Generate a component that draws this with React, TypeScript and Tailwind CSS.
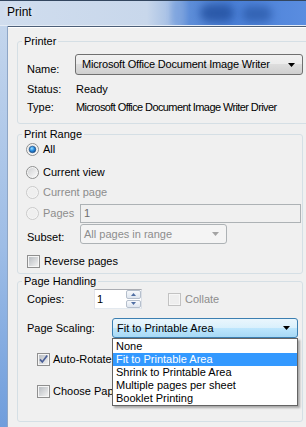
import React from "react";

function Radio({ checked = false, disabled = false }: { checked?: boolean; disabled?: boolean }) {
  return (
    <svg width="13" height="13" viewBox="0 0 13 13" className="shrink-0">
      <defs>
        <linearGradient id="radioFill" x1="0" y1="0" x2="1" y2="1">
          <stop offset="0" stopColor="#cfd0d2" />
          <stop offset="1" stopColor="#fbfbfb" />
        </linearGradient>
        <radialGradient id="radioDot" cx="0.4" cy="0.35" r="0.75">
          <stop offset="0" stopColor="#9be0ff" />
          <stop offset="0.45" stopColor="#2a8ee2" />
          <stop offset="1" stopColor="#0c3f7e" />
        </radialGradient>
      </defs>
      <circle cx="6.5" cy="6.5" r="6" fill="#f6f6f6" stroke={disabled ? "#c9c9c9" : "#8e8f8f"} />
      <circle cx="6.5" cy="6.5" r="4.6" fill={disabled ? "#efefef" : "url(#radioFill)"} />
      {checked && <circle cx="6.5" cy="6.5" r="3.3" fill="url(#radioDot)" stroke="#19497f" strokeWidth="0.6" />}
    </svg>
  );
}

function Check({ checked = false, disabled = false }: { checked?: boolean; disabled?: boolean }) {
  return (
    <svg width="13" height="13" viewBox="0 0 13 13" className="shrink-0">
      <defs>
        <linearGradient id="checkFill" x1="0" y1="0" x2="1" y2="1">
          <stop offset="0" stopColor="#b9bdc2" />
          <stop offset="1" stopColor="#f1f1f1" />
        </linearGradient>
      </defs>
      <rect x="0.5" y="0.5" width="12" height="12" fill="#f6f6f6" stroke={disabled ? "#c2c2c2" : "#8f8f8f"} />
      <rect x="2" y="2" width="9" height="9" fill={disabled ? "#eeeeee" : "url(#checkFill)"} />
      {checked && <path d="M3 6.4l2.3 2.6L10.2 2.6" fill="none" stroke="#4a5f97" strokeWidth="1.7" />}
    </svg>
  );
}

function Arrow({ color = "#000" }: { color?: string }) {
  return (
    <svg width="7" height="4" viewBox="0 0 7 4" className="shrink-0">
      <path d="M0 0h7L3.5 4z" fill={color} />
    </svg>
  );
}

function SpinButton({ up }: { up?: boolean }) {
  return (
    <div className="flex-1 flex items-center justify-center border border-[#b5bfcc] rounded-[2px] bg-[linear-gradient(to_bottom,#f7f9fc,#dfe6ef)]">
      <svg width="5" height="3" viewBox="0 0 5 3">
        <path d={up ? "M0 3h5L2.5 0z" : "M0 0h5L2.5 3z"} fill="#4f6ea3" />
      </svg>
    </div>
  );
}

function TitleBar() {
  return (
    <div className="relative h-[26px] shrink-0 overflow-hidden border-t border-[#33465f] border-b border-b-[#e4ecf6] bg-[linear-gradient(90deg,#d0ddee_0%,#c8d7eb_48%,#a8c1e5_55%,#5d8dd8_62%,#4a7fd6_75%,#5a8de0_100%)]">
      <div className="absolute left-[200px] top-[3px] w-[34px] h-[18px] rounded-full bg-[#224f9e] blur-[4px] opacity-80" />
      <div className="absolute left-[242px] top-[5px] w-[30px] h-[16px] rounded-full bg-[#2a59a8] blur-[4px] opacity-75" />
      <div className="absolute left-[172px] top-0 w-[10px] h-[24px] bg-[#7aa1de] blur-[3px] opacity-70" />
      <div className="relative pl-[7px] pt-[4px] text-[12px] leading-[15px] text-black [text-shadow:0_0_6px_rgba(255,255,255,0.9)]">
        Print
      </div>
    </div>
  );
}

export default function App() {
  return (
    <div className="w-[306px] h-[427px] overflow-hidden flex flex-col bg-[#f0f0f0] font-['Liberation_Sans',Arial,sans-serif] text-[11px] leading-[13px] text-black">
      <TitleBar />
      <div className="flex flex-1 min-h-0">
        <div className="w-[8px] shrink-0 border-r border-[#8ea6c6] bg-[linear-gradient(to_bottom,#c3d5ec,#9ebde6_55%,#6f9ddc)]" />
        <div className="flex-1 min-w-0 overflow-hidden border-t border-[#4d5f78] shadow-[inset_0_1px_0_#ffffff] pl-[9px]">
          {/* Printer */}
          <fieldset className="mt-[8px] w-[300px] border border-[#d5dfe5] rounded-[3px] pb-[9px]">
            <legend className="ml-[4px] px-[2px] leading-[13px]">Printer</legend>
            <div className="flex items-start mt-[6px] pl-[9px]">
              <span className="w-[48px] mt-[9px]">Name:</span>
              <div className="w-[228px] h-[21px] flex items-center justify-between pl-[6px] pr-[7px] border border-[#707070] rounded-[3px] bg-[linear-gradient(to_bottom,#f2f2f2_0%,#ebebeb_50%,#dddddd_50%,#cfcfcf_100%)] tracking-[-0.2px]">
                <span>Microsoft Office Document Image Writer</span>
                <Arrow />
              </div>
            </div>
            <div className="flex mt-[7px] pl-[9px]">
              <span className="w-[49px]">Status:</span>
              <span>Ready</span>
            </div>
            <div className="flex mt-[5px] pl-[9px]">
              <span className="w-[49px]">Type:</span>
              <span className="whitespace-nowrap tracking-[-0.6px]">Microsoft Office Document Image Writer Driver</span>
            </div>
          </fieldset>

          {/* Print Range */}
          <fieldset className="mt-[4px] w-[286px] border border-[#d5dfe5] rounded-[3px] pb-[5px]">
            <legend className="ml-[4px] px-[2px] leading-[13px]">Print Range</legend>
            <div className="flex items-center gap-[4px] h-[13px] mt-[2px] pl-[8px]">
              <Radio checked />
              <span>All</span>
            </div>
            <div className="flex items-center gap-[4px] h-[13px] mt-[10px] pl-[8px]">
              <Radio />
              <span>Current view</span>
            </div>
            <div className="flex items-center gap-[4px] h-[13px] mt-[7px] pl-[8px] text-[#8d8d8d]">
              <Radio disabled />
              <span>Current page</span>
            </div>
            <div className="flex items-center h-[19px] mt-[5px] pl-[8px]">
              <div className="w-[54px] flex items-center gap-[4px] text-[#8d8d8d]">
                <Radio disabled />
                <span>Pages</span>
              </div>
              <div className="w-[221px] h-[19px] border border-[#adb2b5] pl-[3px] leading-[17px] text-[#6d6d6d]">1</div>
            </div>
            <div className="flex items-start mt-[1px] pl-[9px]">
              <span className="w-[53px] mt-[7px]">Subset:</span>
              <div className="w-[147px] h-[20px] flex items-center justify-between pl-[3px] pr-[7px] border border-[#adb2b5] rounded-[3px] bg-[#f4f4f4] text-[#8d8d8d]">
                <span>All pages in range</span>
                <Arrow color="#a3a3a3" />
              </div>
            </div>
            <div className="flex items-center gap-[4px] h-[13px] mt-[11px] pl-[9px]">
              <Check />
              <span>Reverse pages</span>
            </div>
          </fieldset>

          {/* Page Handling */}
          <fieldset className="mt-[1px] w-[286px] border border-[#d5dfe5] rounded-[3px] pb-[23px]">
            <legend className="ml-[4px] px-[2px] leading-[13px]">Page Handling</legend>
            <div className="flex items-center h-[20px] mt-[1px] pl-[9px]">
              <span className="w-[67px]">Copies:</span>
              <div className="flex w-[48px] h-[20px] border border-[#abadb3] border-b-[#e3e9ef] border-r-[#dbdfe6] border-l-[#e2e3ea] bg-white">
                <span className="flex-1 pl-[2px] leading-[18px]">1</span>
                <div className="w-[15px] flex flex-col gap-[1px]">
                  <SpinButton up />
                  <SpinButton />
                </div>
              </div>
              <div className="flex items-center gap-[4px] ml-[26px] text-[#8d8d8d]">
                <Check disabled />
                <span>Collate</span>
              </div>
            </div>
            <div className="flex items-center h-[20px] mt-[9px] pl-[9px]">
              <span className="w-[85px] pt-[1px]">Page Scaling:</span>
              <div className="relative">
                <div className="w-[186px] h-[20px] flex items-center justify-between pl-[4px] pr-[7px] border border-[#3c7fb1] rounded-[3px] bg-[linear-gradient(to_bottom,#eaf6fd_0%,#d9f0fc_50%,#bee6fd_50%,#a7d9f5_100%)]">
                  <span>Fit to Printable Area</span>
                  <Arrow />
                </div>
                <ul className="absolute left-0 top-full z-10 w-[186px] border border-[#646464] bg-white pt-[1px] shadow-[2px_2px_2px_rgba(0,0,0,0.3)]">
                  <li className="h-[13px] pl-[3px]">None</li>
                  <li className="h-[13px] pl-[3px] bg-[#3399ff] text-white">Fit to Printable Area</li>
                  <li className="h-[13px] pl-[3px]">Shrink to Printable Area</li>
                  <li className="h-[13px] pl-[3px]">Multiple pages per sheet</li>
                  <li className="h-[13px] pl-[3px]">Booklet Printing</li>
                </ul>
              </div>
            </div>
            <div className="flex items-center gap-[3px] h-[13px] mt-[15px] pl-[19px] whitespace-nowrap">
              <Check checked />
              <span>Auto-Rotate</span>
            </div>
            <div className="flex items-center gap-[3px] h-[13px] mt-[19px] pl-[19px] whitespace-nowrap">
              <Check />
              <span>Choose Pap</span>
            </div>
          </fieldset>
        </div>
      </div>
    </div>
  );
}
